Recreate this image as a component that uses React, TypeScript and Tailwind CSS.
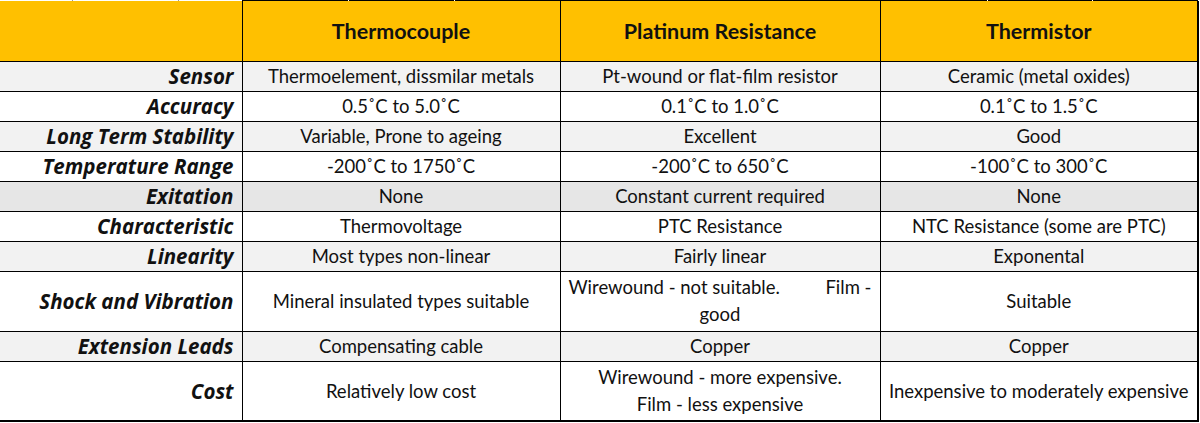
const rows: { label: string; cells: React.ReactNode[]; tall?: boolean; bg: string }[] = [
  { label: "Sensor", bg: "bg-[#f2f2f2]", cells: ["Thermoelement, dissmilar metals", "Pt-wound or flat-film resistor", "Ceramic (metal oxides)"] },
  { label: "Accuracy", bg: "bg-white", cells: ["0.5˚C to 5.0˚C", "0.1˚C to 1.0˚C", "0.1˚C to 1.5˚C"] },
  { label: "Long Term Stability", bg: "bg-[#f2f2f2]", cells: ["Variable, Prone to ageing", "Excellent", "Good"] },
  { label: "Temperature Range", bg: "bg-white", cells: ["-200˚C to 1750˚C", "-200˚C to 650˚C", "-100˚C to 300˚C"] },
  { label: "Exitation", bg: "bg-[#e6e6e6]", cells: ["None", "Constant current required", "None"] },
  { label: "Characteristic", bg: "bg-white", cells: ["Thermovoltage", "PTC Resistance", "NTC Resistance (some are PTC)"] },
  { label: "Linearity", bg: "bg-[#f2f2f2]", cells: ["Most types non-linear", "Fairly linear", "Exponental"] },
  {
    label: "Shock and Vibration",
    bg: "bg-white",
    tall: true,
    cells: [
      "Mineral insulated types suitable",
      <div className="flex flex-col leading-[27px]">
        <div className="flex justify-between pl-[4px] pr-[4px]">
          <span>Wirewound - not suitable.</span>
          <span>Film -</span>
        </div>
        <span>good</span>
      </div>,
      "Suitable",
    ],
  },
  { label: "Extension Leads", bg: "bg-[#f2f2f2]", cells: ["Compensating cable", "Copper", "Copper"] },
  {
    label: "Cost",
    bg: "bg-white",
    tall: true,
    cells: [
      "Relatively low cost",
      <div className="flex flex-col leading-[27px]">
        <span>Wirewound - more expensive.</span>
        <span>Film - less expensive</span>
      </div>,
      "Inexpensive to moderately expensive",
    ],
  },
];

const headers = ["Thermocouple", "Platinum Resistance", "Thermistor"];

export default function App() {
  return (
    <div className="w-[1200px] h-[423px] bg-white font-['Lato','Liberation_Sans',sans-serif] text-[#111]">
      <div className="flex h-px w-[1198px]">
        <div className="w-[242px] bg-white flex">
          <span className="ml-[72px] w-px bg-[#999]" />
          <span className="ml-[105px] w-px bg-[#999]" />
        </div>
        <div className="flex-1 bg-black flex">
          <span className="ml-[106px] w-px bg-white" />
          <span className="ml-[105px] w-px bg-white" />
          <span className="ml-[532px] w-px bg-white" />
          <span className="ml-[104px] w-px bg-white" />
        </div>
      </div>
      <table className="table-fixed border-collapse w-[1198px]">
        <colgroup>
          <col className="w-[242px]" />
          <col className="w-[318px]" />
          <col className="w-[320px]" />
          <col className="w-[318px]" />
        </colgroup>
        <thead>
          <tr className="h-[60px] bg-[#ffc000]">
            <th className="border-r border-b border-black" />
            {headers.map((h, i) => (
              <th
                key={h}
                className={`border-b border-black text-center text-[21.5px] font-bold pt-px ${i === 2 ? "border-r-2" : "border-r"}`}
              >
                {h}
              </th>
            ))}
          </tr>
        </thead>
        <tbody>
          {rows.map((r, ri) => {
            const last = ri === rows.length - 1;
            return (
              <tr key={r.label} className={`${r.tall ? "h-[60px]" : "h-[30px]"} ${r.bg}`}>
                <td
                  className={`border-r border-black text-right pr-2 font-['Open_Sans',sans-serif] text-[20.5px] font-bold italic leading-none ${last ? "border-b-2" : "border-b"}`}
                >
                  {r.label}
                </td>
                {r.cells.map((c, ci) => (
                  <td
                    key={ci}
                    className={`border-black text-center text-[18.5px] leading-none px-1 ${ci === 2 ? "border-r-2" : "border-r"} ${last ? "border-b-2" : "border-b"}`}
                  >
                    {c}
                  </td>
                ))}
              </tr>
            );
          })}
        </tbody>
      </table>
    </div>
  );
}
